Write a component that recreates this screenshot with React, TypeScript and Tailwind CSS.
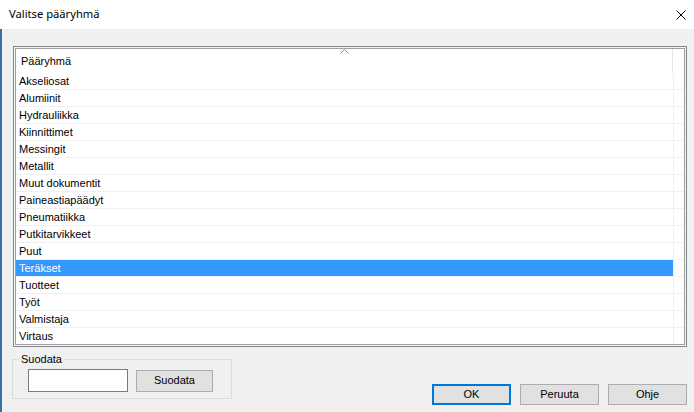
import React from "react";

const rows = [
  "Akseliosat",
  "Alumiinit",
  "Hydrauliikka",
  "Kiinnittimet",
  "Messingit",
  "Metallit",
  "Muut dokumentit",
  "Paineastiapäädyt",
  "Pneumatiikka",
  "Putkitarvikkeet",
  "Puut",
  "Teräkset",
  "Tuotteet",
  "Työt",
  "Valmistaja",
  "Virtaus",
];

const ui = { fontFamily: '"Liberation Sans", Arial, sans-serif' };

export default function App() {
  return (
    <div className="w-[694px] h-[412px] bg-[#f0f0f0] flex flex-col overflow-hidden text-[11px] text-black" style={ui}>
      {/* Title bar */}
      <div className="h-[29px] bg-white flex items-center justify-between pl-[9px] pr-[8px] shrink-0">
        <span className="text-[11.2px] text-black" style={{ fontFamily: '"Noto Sans", "Open Sans", sans-serif' }}>
          Valitse pääryhmä
        </span>
        <svg width="10" height="10" viewBox="0 0 10 10">
          <path d="M0.5 0.5 L9.5 9.5 M9.5 0.5 L0.5 9.5" stroke="#000" strokeWidth="1" fill="none" />
        </svg>
      </div>

      {/* Body */}
      <div className="flex-1 flex flex-col border-l-2 border-[#3b6ea5] pl-[11px] pr-[7px] pt-[17px] pb-[7px]">
        {/* List box */}
        <div className="w-[674px] h-[301px] border border-[#828790] p-px bg-[#f4f4f4] shrink-0">
          <div className="w-full h-full border border-[#a0a0a0] bg-white overflow-hidden flex flex-col">
            {/* Header */}
            <div className="relative h-[24px] flex shrink-0">
              <div className="w-[657px] border-r border-[#e5e5e5] flex items-center pl-[5px]">Pääryhmä</div>
              <div className="flex-1" />
              <svg width="9" height="5" viewBox="0 0 9 5" className="absolute left-[324px] top-0">
                <path d="M0.5 4.5 L4.5 0.5 L8.5 4.5" stroke="#8a8a8a" strokeWidth="1" fill="none" />
              </svg>
            </div>
            {rows.map((r) => {
              const sel = r === "Teräkset";
              return (
                <div key={r} className="h-[17px] flex border-b border-[#f0f0f0] shrink-0">
                  <div
                    className={
                      sel
                        ? "w-[657px] bg-[#3399ff] text-white flex items-center pl-[3px]"
                        : "w-[657px] flex items-center pl-[3px]"
                    }
                  >
                    {r}
                  </div>
                  <div className="w-px bg-[#f0f0f0]" />
                  <div className="flex-1" />
                </div>
              );
            })}
          </div>
        </div>

        {/* Bottom area */}
        <div className="flex-1 flex justify-between items-end">
          <fieldset className="ml-[-1px] w-[220px] border border-[#dcdcdc] pb-[6px] self-start mt-[5px]">
            <legend className="ml-[6px] px-[2px] text-[11px] leading-[14px]">Suodata</legend>
            <div className="flex items-center pt-[3px] pl-[15px] gap-[8px]">
              <div className="w-[100px] h-[23px] bg-white border border-[#7a7a7a]" />
              <button className="w-[77px] h-[22px] bg-[#e1e1e1] border border-[#adadad] text-[11px] flex items-center justify-center">
                Suodata
              </button>
            </div>
          </fieldset>
          <div className="flex gap-[9px]">
            <button className="w-[79px] h-[21px] bg-[#e1e1e1] border-2 border-[#0078d7] text-[11px] flex items-center justify-center">
              OK
            </button>
            <button className="w-[79px] h-[21px] bg-[#e1e1e1] border border-[#adadad] text-[11px] flex items-center justify-center">
              Peruuta
            </button>
            <button className="w-[79px] h-[21px] bg-[#e1e1e1] border border-[#adadad] text-[11px] flex items-center justify-center">
              Ohje
            </button>
          </div>
        </div>
      </div>
    </div>
  );
}
